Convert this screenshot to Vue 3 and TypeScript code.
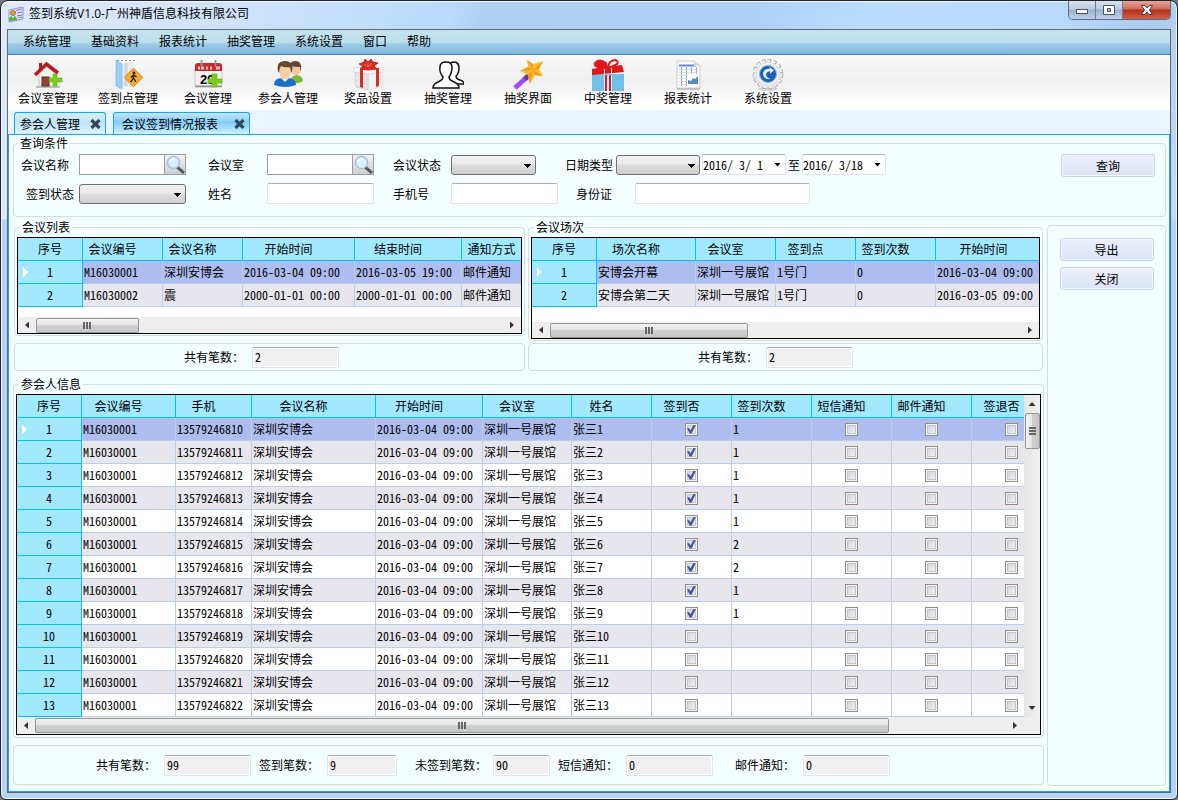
<script setup lang="ts">
import { reactive, ref } from 'vue'

interface Column {
  title: string
  width: number
  kind?: 'check'
}

type Cell = string | boolean

const menus = ['系统管理', '基础资料', '报表统计', '抽奖管理', '系统设置', '窗口', '帮助']

const tools = [
  { name: 'house', label: '会议室管理' },
  { name: 'sign', label: '签到点管理' },
  { name: 'calendar', label: '会议管理' },
  { name: 'people', label: '参会人管理' },
  { name: 'present', label: '奖品设置' },
  { name: 'outline', label: '抽奖管理' },
  { name: 'wand', label: '抽奖界面' },
  { name: 'gift', label: '中奖管理' },
  { name: 'sheet', label: '报表统计' },
  { name: 'gear', label: '系统设置' },
]

const activeTab = ref('会议签到情况报表')
const tabs = ['参会人管理', '会议签到情况报表']

const query = reactive({ meeting: '', room: '', name: '', phone: '', idCard: '', from: '2016/ 3/ 1', to: '2016/ 3/18' })

const groups: {
  title: string
  key: string
  columns: Column[]
  rows: string[][]
  total: string
}[] = [
  {
    title: '会议列表',
    key: 'meetings',
    columns: [
      { title: '会议编号', width: 80 },
      { title: '会议名称', width: 80 },
      { title: '开始时间', width: 112 },
      { title: '结束时间', width: 107 },
      { title: '通知方式', width: 80 },
    ],
    rows: [
      ['M16030001', '深圳安博会', '2016-03-04 09:00', '2016-03-05 19:00', '邮件通知'],
      ['M16030002', '震', '2000-01-01 00:00', '2000-01-01 00:00', '邮件通知'],
    ],
    total: '2',
  },
  {
    title: '会议场次',
    key: 'sessions',
    columns: [
      { title: '场次名称', width: 99 },
      { title: '会议室', width: 80 },
      { title: '签到点', width: 80 },
      { title: '签到次数', width: 80 },
      { title: '开始时间', width: 116 },
    ],
    rows: [
      ['安博会开幕', '深圳一号展馆', '1号门', '0', '2016-03-04 09:00'],
      ['安博会第二天', '深圳一号展馆', '1号门', '0', '2016-03-05 09:00'],
    ],
    total: '2',
  },
]

const attendeeColumns: Column[] = [
  { title: '会议编号', width: 94 },
  { title: '手机', width: 76 },
  { title: '会议名称', width: 124 },
  { title: '开始时间', width: 107 },
  { title: '会议室', width: 89 },
  { title: '姓名', width: 80 },
  { title: '签到否', width: 80, kind: 'check' },
  { title: '签到次数', width: 80 },
  { title: '短信通知', width: 80, kind: 'check' },
  { title: '邮件通知', width: 80, kind: 'check' },
  { title: '签退否', width: 80, kind: 'check' },
]

const signCounts = ['1', '1', '1', '1', '1', '2', '2', '1', '1', '', '', '', '']

const attendees: Cell[][] = signCounts.map((count, i) => [
  'M16030001',
  String(13579246810 + i),
  '深圳安博会',
  '2016-03-04 09:00',
  '深圳一号展馆',
  `张三${i + 1}`,
  count !== '',
  count,
  false,
  false,
  false,
])

const totals = [
  { key: 'all', label: '共有笔数：', value: '99', size: 'wide' },
  { key: 'signed', label: '签到笔数：', value: '9', size: 'medium' },
  { key: 'unsigned', label: '未签到笔数：', value: '90', size: 'narrow' },
  { key: 'sms', label: '短信通知：', value: '0', size: 'wide' },
  { key: 'mail', label: '邮件通知：', value: '0', size: 'wide' },
]
</script>

<template>
  <div class="window">
    <header class="titlebar">
      <svg class="app-icon" viewBox="0 0 16 16" aria-hidden="true">
        <path d="M1 3 L15 0 V12 L1 15Z" fill="#e3e2fa" stroke="#9391d8" />
        <path d="M8 3.500 L14 2 M9 6 L14 5 M9 9 L14 8 M10 11 L14 10" stroke="#7775cf" />
        <circle cx="5" cy="6" r="2.500" fill="#e89640" stroke="#8c5319" stroke-width=".7" />
        <path d="M1 14 Q1 9 5 9 Q9 9 9 13Z" fill="#49b52e" />
        <path d="M4 9 L5 12 L6 9Z" fill="#fff" />
      </svg>
      <h1>签到系统V1.0-广州神盾信息科技有限公司</h1>
      <div class="window-buttons">
        <button type="button" aria-label="最小化">
          <svg width="14" height="14" viewBox="0 0 14 14"><rect x="1.500" y="6.500" width="11" height="4" fill="#fff" stroke="#4a5364" /></svg>
        </button>
        <button type="button" aria-label="最大化">
          <svg width="14" height="14" viewBox="0 0 14 14"><path d="M1.500 2.500h11v9h-11z M5.500 5.500v3h3v-3z" fill="#fff" fill-rule="evenodd" stroke="#4a5364" /></svg>
        </button>
        <button type="button" class="close" aria-label="关闭窗口">
          <svg width="14" height="14" viewBox="0 0 14 14"><path d="M1.500 2.500h3.500l2 2.500 2-2.500h3.500L9.500 7l3 4.500H9L7 9l-2 2.500H1.500l3-4.500z" fill="#fff" stroke="#5b3a44" /></svg>
        </button>
      </div>
    </header>

    <div class="client">
      <nav class="menubar" aria-label="主菜单">
        <button v-for="menu in menus" :key="menu" type="button">{{ menu }}</button>
      </nav>

      <div class="toolbar">
        <button v-for="tool in tools" :key="tool.name" type="button">
          <svg width="32" height="32" viewBox="0 0 32 32" aria-hidden="true">
            <g v-if="tool.name === 'house'">
              <path d="M4 28 H28" stroke="#bbb" stroke-width="2" />
              <path d="M7 15 L15 8 L24 15 V27 H7Z" fill="#f4f2f0" stroke="#c9c5c2" />
              <rect x="10" y="18" width="7" height="9" fill="#8b4a35" stroke="#5e2e20" />
              <path d="M7 4 h3 v6 h-3z" fill="#a51c1c" />
              <path d="M3 16 L14.500 5 L26 14" fill="none" stroke="#b71c1f" stroke-width="3.500" />
              <path d="M17 19 h4 v-4 h4 v4 h5 v4 h-5 v4 h-4 v-4 h-4z" fill="#7ccb1d" stroke="#62ae12" stroke-width=".6" />
            </g>
            <g v-else-if="tool.name === 'sign'">
              <path d="M10 4 L22 2 V26 L10 28Z" fill="#e9ebef" />
              <path d="M14 4 V27" stroke="#cfd4db" stroke-width="3" />
              <path d="M4 1 L10 5 V30 L4 27Z" fill="#9fcdf3" stroke="#74aee0" stroke-width=".6" />
              <path d="M5 1.500 h18" stroke="#8e9aaa" stroke-dasharray="2 2" />
              <rect x="15" y="12" width="13" height="13" rx="1" transform="rotate(45 21.500 18.500)" fill="#f8ad32" stroke="#d98d20" />
              <circle cx="22" cy="14" r="1.400" fill="#222" />
              <path d="M22 15.500 L21 20 L18.500 23 M21.500 19 L24 23 M19 18.500 L21.500 16 L24.500 18" stroke="#222" stroke-width="1.400" fill="none" />
            </g>
            <g v-else-if="tool.name === 'calendar'">
              <rect x="3" y="5" width="27" height="22" rx="2" fill="#f1f1f3" stroke="#c6c6ca" />
              <path d="M3 27.500 h27" stroke="#8b8b8f" stroke-width="1.500" />
              <path d="M3 12 V7 Q3 4 6 4 H27 Q30 4 30 7 V12Z" fill="#c42b30" />
              <path d="M6 9 h2 m1 0 h3 m2 0 h2 m2 0 h2 m4 0 h4" stroke="#f0b9b9" stroke-width="3" />
              <path d="M9.500 1 v7 M23.500 1 v7" stroke="#8f9195" stroke-width="1.800" />
              <text x="8" y="25" class="day">29</text>
              <path d="M16 20 h4 v-5 h5 v5 h5 v4 h-5 v4 h-5 v-4 h-4z" fill="#7ccb1d" stroke="#62ae12" stroke-width=".6" />
            </g>
            <g v-else-if="tool.name === 'people'">
              <path d="M18 22 Q20 16 25 16 Q31 17 31 22 Q27 25 20 24Z" fill="#7cba35" />
              <ellipse cx="24" cy="10" rx="5" ry="6" fill="#f2c79b" />
              <path d="M18 10 Q17 2 23 2 Q30 2 29 10 L28 12 V8 Q23 8 19 7Z" fill="#65442f" />
              <path d="M2 26 Q2 19 10 19 H16 Q24 19 24 26 Q14 30 2 26Z" fill="#1c6fc4" />
              <path d="M9 19 L13 23 L17 19Z" fill="#e8f0f8" />
              <ellipse cx="13" cy="12" rx="6" ry="8" fill="#f8d0a8" />
              <path d="M6 12 Q4 2 13 2 Q22 2 20 12 L19 14 Q19 9 17 8 Q12 9 9 7 Q7 10 7 14Z" fill="#69462e" />
            </g>
            <g v-else-if="tool.name === 'present'">
              <path d="M3 12 L15 14 L30 12 V27 L17 31 L4 28Z" fill="#e2e2e5" stroke="#c6c6ca" stroke-width=".7" />
              <path d="M17 14 V31 L30 27 V12Z" fill="#f2f2f4" />
              <path d="M2 9 L16 7 L31 9 V13 L16 15 L2 13Z" fill="#f9f9fa" stroke="#d0d0d3" stroke-width=".7" />
              <path d="M5 18v1m8 0v1m0 6v1m-8-3v1m15-4v1m9 2v1" stroke="#fff" stroke-width="2" />
              <path d="M8 9 h3 v20 l-3-1z M24 9 h3 v18 l-3 1z" fill="#d8301e" />
              <path d="M16 11 L8 10 L11 7 L7 5 L12 3 L13 0 L16 3 L19 0 L21 3 L26 4 L22 7 L25 10Z" fill="#d92a20" stroke="#b81a11" stroke-width=".8" />
              <path d="M12 5 L16 8 L20 4 M16 8 V4" fill="none" stroke="#f26a58" />
            </g>
            <g v-else-if="tool.name === 'outline'" fill="#fff" stroke="#111" stroke-width="1.500">
              <path d="M18 4 Q26 1 27 8 Q27 15 24 17 Q24 20 28 21 Q32 22 32 25 H20" />
              <path d="M1 29 Q1 25 6 23 Q11 21 11 18 Q7 13 8 8 Q8 3 14 3 Q20 3 20 8 Q20 14 17 18 Q17 21 22 23 Q27 25 27 29Z" />
            </g>
            <g v-else-if="tool.name === 'wand'">
              <path d="M3 29 L15 18" stroke="#a34bf6" stroke-width="5" />
              <path d="M13 20 L17 16" stroke="#5e3f9c" stroke-width="5" />
              <path d="M15 1 L21 5 L31 2 L27 10 L31 17 L23 16 L18 25 L16 16 L8 12 L16 8Z" fill="#fdc02c" />
              <path d="M21 11 L15 1 L21 5Z M21 11 L31 2 L27 10Z M21 11 L31 17 L23 16Z M21 11 L18 25 L16 16Z M21 11 L8 12 L16 8Z" fill="#f39a1d" />
            </g>
            <g v-else-if="tool.name === 'gift'">
              <rect y="15" width="32" height="17" fill="#71c0ec" />
              <path d="M0 10 L12 8 L30 6 L32 13 L0 16Z" fill="#e3171b" />
              <path d="M12 16h8v16h-8z" fill="#dff0fa" />
              <path d="M12 8h1v8h-1z M19 8h1v7h-1z" fill="#fff" />
              <path d="M13 16 h2 v16 h-2z M17 16 h2 v16 h-2z" fill="#d21f35" />
              <path d="M15 9 Q1 9 3 4 Q7-1 14 4z" fill="#e3171b" stroke="#e3171b" stroke-width="2" />
              <path d="M16 8 Q17 1 24 1 Q28 4 23 6 Q20 8 16 8Z" fill="#fff" stroke="#e3171b" stroke-width="2" />
            </g>
            <g v-else-if="tool.name === 'sheet'">
              <path d="M5 2 H22 L28 7 V29 H5Z" fill="#fbfbfb" stroke="#c3c3c5" stroke-width=".8" />
              <path d="M5 30 h23" stroke="#999" />
              <path d="M7 6.500 H24" stroke="#5e8fce" stroke-width="2" />
              <path d="M9.500 8v19M14.500 8v19M19.500 8v7M24.500 8v7" stroke="#9aa8ba" />
              <path d="M7 10.500h19M7 13.500h19M7 16.500h8M7 19.500h8M7 22.500h8M7 25.500h8" stroke="#c9d0da" stroke-width=".8" />
              <path d="M16 25 V21 L19 22 L21 19 L23 20 L26 17 V25Z" fill="#5f86bd" />
              <path d="M22 2 V7 H28Z" fill="#d8d8da" />
            </g>
            <g v-else>
              <ellipse cx="16" cy="30" rx="10" ry="2" fill="#d2d2d2" />
              <circle cx="16" cy="15" r="13.500" fill="none" stroke="#999da2" stroke-width="3.500" stroke-dasharray="3.700 2" />
              <circle cx="16" cy="15" r="13" fill="none" stroke="#f1f2f3" stroke-width="3" stroke-dasharray="3 2.445" stroke-dashoffset="-.3" />
              <circle cx="16" cy="15" r="12" fill="#eceef0" stroke="#d0d2d5" stroke-width=".6" />
              <circle cx="16" cy="15" r="8.500" fill="#1d5fb0" stroke="#8eb4dc" />
              <path d="M19 20 Q11 21 11 14 Q13 9 18 10 L17 8 L22 11 L18 15 L18 12 Q14 13 14 16 Q15 19 19 20Z" fill="#e1effb" />
            </g>
          </svg>
          <span>{{ tool.label }}</span>
        </button>
      </div>

      <div class="tabs">
        <div v-for="tab in tabs" :key="tab" class="tab" :class="{ active: tab === activeTab }">
          <button type="button" class="tab-name" @click="activeTab = tab">{{ tab }}</button>
          <button type="button" class="tab-close" :aria-label="`关闭${tab}`">
            <svg width="11" height="10" viewBox="0 0 11 10"><path d="M1.500 1 L9.500 9 M9.500 1 L1.500 9" stroke="#33475a" stroke-width="3.200" /></svg>
          </button>
        </div>
      </div>

      <main class="page">
        <fieldset class="box query">
          <legend>查询条件</legend>
          <form class="query-form" @submit.prevent>
            <div class="fields">
              <label for="meeting">会议名称</label>
              <div class="lookup">
                <input id="meeting" v-model="query.meeting" type="text" />
                <button type="button" aria-label="查找会议">
                  <svg width="20" height="19" viewBox="0 0 20 19"><path d="M12 12 L19 18" stroke="#555a60" stroke-width="3" /><circle cx="8.500" cy="7.500" r="6" fill="#d9effc" stroke="#9cc3e2" stroke-width="1.500" /><path d="M5 7 Q6 3 10 4" fill="none" stroke="#fff" stroke-width="2" /></svg>
                </button>
              </div>
              <label for="room">会议室</label>
              <div class="lookup">
                <input id="room" v-model="query.room" type="text" />
                <button type="button" aria-label="查找会议室">
                  <svg width="20" height="19" viewBox="0 0 20 19"><path d="M12 12 L19 18" stroke="#555a60" stroke-width="3" /><circle cx="8.500" cy="7.500" r="6" fill="#d9effc" stroke="#9cc3e2" stroke-width="1.500" /><path d="M5 7 Q6 3 10 4" fill="none" stroke="#fff" stroke-width="2" /></svg>
                </button>
              </div>
              <label for="status">会议状态</label>
              <select id="status" class="short"><option></option></select>
              <div class="dates">
                <label for="date-type">日期类型</label>
                <select id="date-type" class="short"><option></option></select>
                <div class="date">
                  <input v-model="query.from" type="text" aria-label="开始日期" />
                  <button type="button" aria-label="选择开始日期"></button>
                </div>
                <span>至</span>
                <div class="date">
                  <input v-model="query.to" type="text" aria-label="结束日期" />
                  <button type="button" aria-label="选择结束日期"></button>
                </div>
              </div>

              <label for="sign-status" class="inset">签到状态</label>
              <select id="sign-status"><option></option></select>
              <label for="name">姓名</label>
              <input id="name" v-model="query.name" class="text" type="text" />
              <label for="phone">手机号</label>
              <input id="phone" v-model="query.phone" class="text" type="text" />
              <div class="id-card">
                <label for="id-card">身份证</label>
                <input id="id-card" v-model="query.idCard" class="text" type="text" />
              </div>
            </div>
            <button type="submit" class="command">查询</button>
          </form>
        </fieldset>

        <div class="body">
          <div class="data">
            <div class="pair">
              <section v-for="group in groups" :key="group.key" class="group" :class="group.key">
                <fieldset class="box">
                  <legend>{{ group.title }}</legend>
                  <div class="grid">
                    <div class="rows">
                      <table>
                        <colgroup>
                          <col class="index-col" />
                          <col v-for="col in group.columns" :key="col.title" :style="{ width: col.width + 'px' }" />
                        </colgroup>
                        <thead>
                          <tr>
                            <th class="index">序号</th>
                            <th v-for="col in group.columns" :key="col.title">{{ col.title }}</th>
                          </tr>
                        </thead>
                        <tbody>
                          <tr v-for="(row, i) in group.rows" :key="i" :class="{ selected: i === 0 }">
                            <th scope="row">{{ i + 1 }}</th>
                            <td v-for="(cell, c) in row" :key="c">{{ cell }}</td>
                          </tr>
                        </tbody>
                      </table>
                    </div>
                    <div class="hscroll">
                      <i class="arrow left"></i>
                      <div class="track"><div class="thumb"><i></i></div></div>
                      <i class="arrow right"></i>
                    </div>
                  </div>
                </fieldset>
                <div class="box total">
                  <label :for="`total-${group.key}`">共有笔数：</label>
                  <input :id="`total-${group.key}`" class="count wide" type="text" readonly :value="group.total" />
                </div>
              </section>
            </div>

            <fieldset class="box attendees">
              <legend>参会人信息</legend>
              <div class="grid">
                <div class="with-vscroll">
                  <div class="rows">
                    <table>
                      <colgroup>
                        <col class="index-col" />
                        <col v-for="col in attendeeColumns" :key="col.title" :style="{ width: col.width + 'px' }" />
                      </colgroup>
                      <thead>
                        <tr>
                          <th class="index">序号</th>
                          <th v-for="col in attendeeColumns" :key="col.title">{{ col.title }}</th>
                        </tr>
                      </thead>
                      <tbody>
                        <tr v-for="(row, i) in attendees" :key="i" :class="{ selected: i === 0 }">
                          <th scope="row">{{ i + 1 }}</th>
                          <td v-for="(cell, c) in row" :key="c" :class="{ check: attendeeColumns[c].kind }">
                            <input v-if="attendeeColumns[c].kind" type="checkbox" :checked="cell === true" :aria-label="`${attendeeColumns[c].title} ${i + 1}`" />
                            <template v-else>{{ cell }}</template>
                          </td>
                        </tr>
                      </tbody>
                    </table>
                  </div>
                  <div class="vscroll">
                    <i class="arrow up"></i>
                    <div class="track"><div class="thumb"><i></i></div></div>
                    <i class="arrow down"></i>
                  </div>
                </div>
                <div class="hscroll">
                  <i class="arrow left"></i>
                  <div class="track"><div class="thumb"><i></i></div></div>
                  <i class="arrow right"></i>
                </div>
              </div>
            </fieldset>

            <div class="box totals">
              <div v-for="item in totals" :key="item.key" class="item" :class="item.key">
                <label :for="`sum-${item.key}`">{{ item.label }}</label>
                <input :id="`sum-${item.key}`" class="count" :class="item.size" type="text" readonly :value="item.value" />
              </div>
            </div>
          </div>

          <aside class="box side">
            <button type="button" class="command">导出</button>
            <button type="button" class="command">关闭</button>
          </aside>
        </div>
      </main>
    </div>
  </div>
</template>

<style>
html,
body {
  background: #6f7780;
}
</style>

<style scoped>
.window,
.window * {
  box-sizing: border-box;
}

.window {
  display: flex;
  flex-direction: column;
  min-height: 100vh;
  padding: 0 6px 6px;
  border: 1px solid #23232b;
  border-radius: 8px 8px 6px 6px;
  background:
    linear-gradient(transparent 218px, #b4d3f6 219px),
    linear-gradient(100deg, #dfeafa 0%, #cfe2f8 18%, #c3dffc 27%, #b9dbfd 34%, #b0d0f3 37%, #b0d2f6 58%, #badcff 66%, #bbdbfd 80%, #abcbee 88%, #cfe1f6 94%, #c4dcf8 100%);
  box-shadow: inset 0 0 0 1px #eef6ff;
  color: #000;
  font: 12px/14px "Noto Sans Mono CJK SC", "Noto Sans CJK SC", "Liberation Sans", sans-serif;
}

button,
input,
select {
  margin: 0;
  padding: 0;
  border: 0;
  border-radius: 0;
  background: none;
  color: inherit;
  font: inherit;
}

.titlebar,
.menubar,
.toolbar {
  font-family: "Open Sans", "Noto Sans CJK SC", sans-serif;
}

.titlebar {
  display: flex;
  align-items: flex-start;
  height: 28px;
}

.app-icon {
  width: 16px;
  height: 16px;
  margin: 6px 5px 0 1px;
}

.titlebar h1 {
  flex: 1;
  margin: 5px 0 0;
  font-size: 12px;
  font-weight: 400;
  line-height: 16px;
}

.window-buttons {
  display: flex;
  height: 19px;
  overflow: hidden;
  border: 1px solid #596b83;
  border-top: 0;
  border-radius: 0 0 5px 5px;
}

.window-buttons button {
  display: grid;
  place-items: center;
  width: 27px;
  border-right: 1px solid #6b7e96;
  background: linear-gradient(#d5e2f0, #b9cce0 45%, #98b0ca 50%, #bdd2e6);
}

.window-buttons .close {
  width: 47px;
  border: 0;
  background: linear-gradient(#e6a79c, #d06a5a 45%, #b52e1b 50%, #d26147);
}

.client {
  display: flex;
  flex: 1;
  flex-direction: column;
  border: 1px solid #5b6b76;
  background: #eaf6ff;
}

.menubar {
  display: flex;
  height: 25px;
  padding: 0 5px;
  border-bottom: 1px solid #3f87b5;
  background: linear-gradient(#c6e2ec, #bcdfee 50%, #9bcbe5 60%, #81b7dc);
}

.menubar button {
  padding: 0 10px;
}

.toolbar {
  display: flex;
  height: 55px;
  background: linear-gradient(#f9f9f9, #efefef 48%, #fff 90%);
}

.toolbar button {
  display: flex;
  flex-direction: column;
  align-items: center;
  gap: 1px;
  width: 80px;
  padding-top: 4px;
}

.day {
  font: 700 13px "Liberation Sans", sans-serif;
}

.tabs {
  display: flex;
  align-items: flex-end;
  gap: 7px;
  height: 25px;
  padding-left: 6px;
  border-bottom: 1px solid #1aa5ee;
}

.tab {
  display: flex;
  align-items: center;
  gap: 10px;
  height: 22px;
  padding: 0 4px 0 5px;
  border: 1px solid #1aa5ee;
  border-bottom: 0;
  border-radius: 3px 3px 0 0;
  background: linear-gradient(#d3effe, #bfe5fc 45%, #d8f3ff);
}

.tab.active {
  gap: 16px;
  padding-left: 8px;
  background: linear-gradient(#c0e6fd, #86ccf8 45%, #c8f4ff);
}

.tab-close {
  display: grid;
}

.page {
  display: flex;
  flex: 1;
  flex-direction: column;
  padding: 1px 3px 5px 4px;
  border: solid #1aa5ee;
  border-width: 0 1px 1px;
  background: #f4feff;
}

.box {
  min-width: 0;
  margin: 0;
  padding: 0;
  border: 1px solid #d3dbe3;
  border-radius: 4px;
}

legend {
  margin-left: 4px;
  padding: 0 2px;
  line-height: 14px;
}

.group legend,
.attendees legend {
  margin-left: 3px;
}

.query-form {
  display: flex;
  justify-content: space-between;
  align-items: flex-start;
  padding: 4px 10px 12px 7px;
}

.fields {
  display: grid;
  grid-template-columns: 58px 129px 59px 126px 58px 114px auto;
  grid-auto-rows: 21px;
  row-gap: 8px;
  align-items: center;
}

.inset {
  padding-left: 5px;
}

.lookup {
  display: flex;
  width: 107px;
  height: 21px;
  border: 1px solid #9a9da1;
  background: #fff;
}

.lookup input {
  width: 84px;
}

.lookup button {
  display: grid;
  place-items: center;
  width: 21px;
  border-left: 1px solid #9a9da1;
  background: linear-gradient(#f2f2f2, #cfcfcf);
}

select {
  width: 107px;
  height: 20px;
  border: 1px solid #707070;
  border-radius: 3px;
  appearance: none;
  background:
    linear-gradient(#000, #000) right 4px top 8px / 7px 1px no-repeat,
    linear-gradient(#000, #000) right 5px top 9px / 5px 1px no-repeat,
    linear-gradient(#000, #000) right 6px top 10px / 3px 1px no-repeat,
    linear-gradient(#000, #000) right 7px top 11px / 1px 1px no-repeat,
    linear-gradient(#f2f2f2, #ebebeb 45%, #dddddd 50%, #cfcfcf);
}

.short {
  width: 85px;
}

.dates {
  display: flex;
  align-items: center;
  gap: 2px;
}

.dates label {
  width: 49px;
}

.dates select {
  width: 84px;
}

.text,
.date {
  height: 21px;
  border: 1px solid #e2e3ea;
  border-top-color: #abadb3;
  border-radius: 2px;
  background: #fff;
}

.text {
  width: 107px;
  padding: 0 3px;
}

.date {
  display: flex;
  width: 84px;
}

.date input {
  width: 71px;
}

.date button {
  align-self: center;
  width: 7px;
  height: 4px;
  background: #000;
  clip-path: polygon(0 0, 100% 0, 50% 100%);
}

.id-card {
  display: flex;
  align-items: center;
  padding-left: 11px;
}

.id-card label {
  width: 59px;
}

.id-card .text {
  width: 175px;
}

.command {
  width: 94px;
  height: 23px;
  border: 1px solid #c2d2f0;
  border-radius: 3px;
  background: linear-gradient(#edf0fb, #dbe3f6);
  box-shadow: inset 0 0 0 1px #f3f6fe;
}

.body {
  display: flex;
  flex: 1;
  gap: 3px;
}

.data {
  flex: 1;
  min-width: 0;
  padding-top: 3px;
}

.side {
  display: flex;
  flex-direction: column;
  align-items: center;
  gap: 6px;
  width: 119px;
  margin-top: 8px;
  padding-top: 12px;
}

.pair {
  display: grid;
  grid-template-columns: minmax(0, 511fr) minmax(0, 515fr);
  gap: 3px;
  padding: 0 1px;
}

.group {
  display: flex;
  flex-direction: column;
  justify-content: space-between;
  gap: 2px;
}

.group .box {
  padding: 0 2px 1px;
}

.grid {
  margin-top: 3px;
  border: 1px solid #000;
  background: #fff;
}

.rows {
  overflow: hidden;
}

.meetings .rows {
  padding-bottom: 10px;
}

.sessions .rows {
  padding-bottom: 15px;
}

table {
  width: 0;
  table-layout: fixed;
  border-collapse: separate;
  border-spacing: 0;
}

.index-col {
  width: 65px;
}

th,
td {
  height: 23px;
  padding: 0 0 0 1px;
  border: solid #b8cfeb;
  border-width: 0 1px 1px 0;
  font-weight: 400;
  text-align: left;
  line-height: 22px;
  white-space: nowrap;
}

th {
  padding: 0;
  border-color: #00bfff;
  background: #a2e9ff;
  text-align: center;
}

thead th {
  padding-right: 20px;
}

thead .index {
  padding: 0;
}

tbody tr:nth-child(even) td {
  background: #e7e6ed;
}

tbody tr.selected td {
  background: #aebdef;
}

.selected th {
  background: conic-gradient(from 225deg at 100% 50%, #fff 90deg, transparent 0) 5px 6px / 5px 10px no-repeat, #a2e9ff;
}

.check {
  padding: 0;
  text-align: center;
}

.check input {
  display: block;
  width: 13px;
  height: 13px;
  margin: 0 auto;
  border: 1px solid #8e8f8f;
  appearance: none;
  background: linear-gradient(135deg, #cbcfd5, #f6f6f6);
  box-shadow: inset 0 0 0 1px #f4f4f4, inset 0 0 0 2px #c3c6cb;
}

.check input:checked::before {
  display: block;
  width: 9px;
  height: 9px;
  margin: 1px;
  background: #3f55a0;
  clip-path: polygon(0 42%, 24% 42%, 40% 65%, 75% 0, 100% 0, 52% 100%, 30% 100%);
  content: "";
}

.with-vscroll {
  display: flex;
}

.with-vscroll .rows {
  flex: 1;
  min-width: 0;
}

.hscroll {
  display: flex;
  align-items: center;
  height: 16px;
  background: #eee;
}

.arrow {
  flex: none;
  width: 4px;
  height: 7px;
  margin: 0 7px;
  background: #333;
}

.left {
  clip-path: polygon(100% 0, 100% 100%, 0 50%);
}

.right {
  clip-path: polygon(0 0, 100% 50%, 0 100%);
}

.track {
  flex: 1;
}

.thumb {
  display: grid;
  place-items: center;
  height: 15px;
  border: 1px solid #959595;
  border-radius: 2px;
  background: linear-gradient(#f3f3f3, #e4e4e5 45%, #cfd0d2 50%, #c5c6c8);
}

.thumb i {
  width: 8px;
  height: 7px;
  background: repeating-linear-gradient(90deg, #666 0 2px, transparent 2px 3px);
}

.meetings .thumb {
  width: 22%;
}

.sessions .thumb {
  width: 42%;
}

.attendees .hscroll {
  height: 17px;
  padding-right: 16px;
}

.attendees .hscroll .thumb {
  width: 88%;
}

.vscroll {
  display: flex;
  flex-direction: column;
  align-items: center;
  width: 16px;
  background: linear-gradient(90deg, #e6e6e6, #f0f0f0);
}

.vscroll .arrow {
  width: 7px;
  height: 4px;
  margin: 7px 0;
}

.up {
  clip-path: polygon(0 100%, 50% 0, 100% 100%);
}

.down {
  clip-path: polygon(0 0, 100% 0, 50% 100%);
}

.vscroll .thumb {
  width: 15px;
  height: 36px;
  background: linear-gradient(90deg, #f3f3f3, #e4e4e5 45%, #cfd0d2 50%, #c5c6c8);
}

.vscroll .thumb i {
  width: 7px;
  height: 8px;
  background: repeating-linear-gradient(#666 0 2px, transparent 2px 3px);
}

.count {
  height: 21px;
  padding: 0 2px 2px;
  border: 1px solid #e2e3ea;
  border-top-color: #abadb3;
  border-radius: 2px;
  background: #f0f0f0;
  box-shadow: inset 0 0 0 1px #fff;
}

.wide {
  width: 87px;
}

.medium {
  width: 70px;
}

.narrow {
  width: 57px;
}

.total {
  display: flex;
  align-items: center;
  gap: 8px;
  height: 28px;
}

.group .total {
  padding: 0 0 0 169px;
}

.attendees {
  margin-top: 6px;
  padding: 0 2px 2px;
}

.totals {
  display: flex;
  align-items: center;
  gap: 8px;
  height: 40px;
  margin-top: 7px;
  padding-left: 82px;
}

.item {
  display: flex;
  align-items: center;
  gap: 8px;
}

.unsigned {
  gap: 6px;
  margin-left: 10px;
}

.mail {
  margin-left: 14px;
}
</style>
